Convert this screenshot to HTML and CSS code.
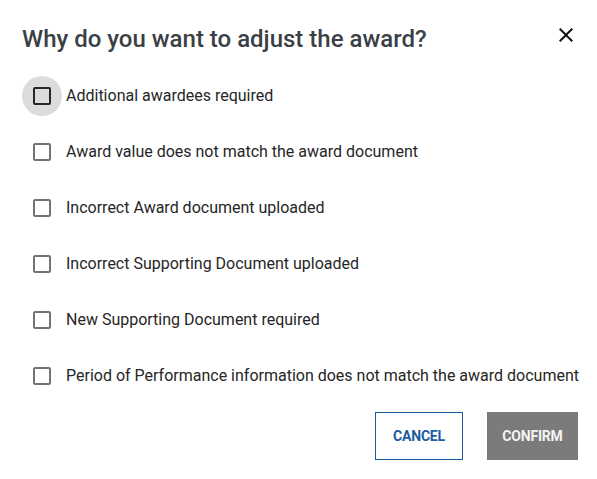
FILE: index.html
```html
<!DOCTYPE html>
<html>
<head>
<meta charset="utf-8">
<link rel="stylesheet" href="styles.css">
</head>
<body>
<div class="dialog">
  <div class="header">
    <h1 class="title">Why do you want to adjust the award?</h1>
    <button class="close" aria-label="Close">
      <svg width="24" height="24" viewBox="0 0 24 24"><path d="M19 6.41L17.59 5 12 10.59 6.41 5 5 6.41 10.59 12 5 17.59 6.41 19 12 13.41 17.59 19 19 17.59 13.41 12z" fill="#111"/></svg>
    </button>
  </div>
  <ul class="options">
    <li class="option"><span class="cb-wrap hover"><span class="cb dark"></span></span><span class="label">Additional awardees required</span></li>
    <li class="option"><span class="cb-wrap"><span class="cb"></span></span><span class="label">Award value does not match the award document</span></li>
    <li class="option"><span class="cb-wrap"><span class="cb"></span></span><span class="label">Incorrect Award document uploaded</span></li>
    <li class="option"><span class="cb-wrap"><span class="cb"></span></span><span class="label">Incorrect Supporting Document uploaded</span></li>
    <li class="option"><span class="cb-wrap"><span class="cb"></span></span><span class="label">New Supporting Document required</span></li>
    <li class="option"><span class="cb-wrap"><span class="cb"></span></span><span class="label">Period of Performance information does not match the award document</span></li>
  </ul>
  <div class="actions">
    <button class="btn cancel">CANCEL</button>
    <button class="btn confirm">CONFIRM</button>
  </div>
</div>
</body>
</html>
```

FILE: styles.css
```css
* { box-sizing: border-box; }
html, body { margin: 0; padding: 0; background: #fff; }
body { font-family: Roboto, "Liberation Sans", sans-serif; }
.dialog {
  width: 597px;
  height: 479px;
  padding: 25px 19px 0 22px;
  display: flex;
  flex-direction: column;
}
.header {
  display: flex;
  justify-content: space-between;
  align-items: flex-start;
  height: 43px;
}
.title {
  margin: 0;
  font-size: 24px;
  line-height: 28px;
  font-weight: 500;
  color: #3b3f46;
}
.close {
  border: 0;
  background: none;
  padding: 0;
  margin: -2px 0 0 0;
  width: 24px;
  height: 24px;
  cursor: pointer;
}
.close svg { display: block; }
.options {
  list-style: none;
  margin: 0;
  padding: 0;
}
.option {
  display: flex;
  align-items: center;
  height: 56px;
}
.cb-wrap {
  width: 40px;
  height: 40px;
  border-radius: 50%;
  display: flex;
  align-items: center;
  justify-content: center;
  margin-right: 4px;
  flex: none;
}
.cb-wrap.hover { background: #dcdcdc; }
.cb {
  width: 18px;
  height: 18px;
  border: 2px solid #757575;
  border-radius: 2px;
  background: #fff;
}
.cb.dark { border-color: #262626; background: transparent; }
.label {
  font-size: 16px;
  line-height: 20px;
  color: #262626;
  white-space: nowrap;
}
.actions {
  display: flex;
  justify-content: flex-end;
  gap: 24px;
  margin-top: 8px;
}
.btn {
  height: 48px;
  font-family: Roboto, "Liberation Sans", sans-serif;
  font-size: 14px;
  font-weight: 700;
  letter-spacing: -0.2px;
  cursor: pointer;
}
.cancel {
  width: 88px;
  background: #fff;
  border: 1px solid #185a9d;
  color: #1c5d9f;
}
.confirm {
  width: 91px;
  background: #7b7b7b;
  border: 0;
  color: #f4f4f4;
}
```
